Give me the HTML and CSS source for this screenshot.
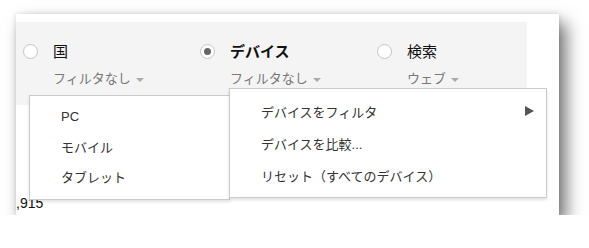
FILE: index.html
```html
<!DOCTYPE html>
<html lang="ja">
<head>
  <meta charset="UTF-8">
  <title>ディメンション選択</title>
  <link rel="stylesheet" href="styles.css">
</head>
<body>
  <div class="window">
    <div class="tabs">
      <div class="tab">
        <span class="radio"></span>
        <div class="tab-text">
          <div class="label">国</div>
          <div class="sub">フィルタなし <span class="caret"></span></div>
        </div>
      </div>
      <div class="tab">
        <span class="radio checked"></span>
        <div class="tab-text">
          <div class="label bold">デバイス</div>
          <div class="sub">フィルタなし <span class="caret"></span></div>
        </div>
      </div>
      <div class="tab">
        <span class="radio"></span>
        <div class="tab-text">
          <div class="label">検索</div>
          <div class="sub">ウェブ <span class="caret"></span></div>
        </div>
      </div>
    </div>
    <div class="count">,915</div>

    <ul class="menu menu-devices">
      <li>PC</li>
      <li>モバイル</li>
      <li>タブレット</li>
    </ul>
    <ul class="menu menu-actions">
      <li>デバイスをフィルタ <span class="arrow"></span></li>
      <li>デバイスを比較...</li>
      <li>リセット（すべてのデバイス）</li>
    </ul>
  </div>
</body>
</html>
```

FILE: styles.css
```css
:root {
  --panel: #f4f4f4;
  --text: #222;
  --muted: #777;
  --menu-border: #cbcbcb;
}
* { box-sizing: border-box; }
body {
  margin: 0;
  padding: 14px 0 0 16px;
  background: #fff;
  font-family: "Liberation Sans", "Noto Sans CJK JP", sans-serif;
  color: var(--text);
}

/* Window card */
.window {
  position: relative;
  width: 543px;
  height: 201px;
  background: #fff;
  box-shadow: 7px 9px 16px rgba(0, 0, 0, 0.55), 0 0 5px rgba(0, 0, 0, 0.12);
  padding-top: 8px;
}

/* Dimension tabs */
.tabs {
  display: flex;
  width: 511px;
  height: 83px;
  background: var(--panel);
  padding: 22px 0 0 7px;
}
.tab {
  display: flex;
  flex: none;
  width: 177px;
  gap: 15px;
}
.tab:last-child { width: auto; }
.radio {
  flex: none;
  width: 15px;
  height: 15px;
  border: 1px solid #c4c4c4;
  border-radius: 50%;
  background: #fff;
  display: flex;
  align-items: center;
  justify-content: center;
}
.radio.checked::after {
  content: '';
  width: 7px;
  height: 7px;
  border-radius: 50%;
  background: #666;
}
.label {
  font-size: 15px;
  line-height: 15px;
  color: #111;
}
.label.bold { font-weight: 700; }
.sub {
  margin-top: 12px;
  font-size: 13px;
  line-height: 16px;
  color: var(--muted);
  display: flex;
  align-items: center;
  gap: 5px;
}
.caret {
  width: 0;
  height: 0;
  border-left: 4px solid transparent;
  border-right: 4px solid transparent;
  border-top: 4px solid #aaa;
  margin-top: 1px;
}

.count {
  margin-top: 90px;
  font-size: 14px;
  color: #111;
}

/* Dropdown menus */
.menu {
  position: absolute;
  margin: 0;
  list-style: none;
  background: #fff;
  border: 1px solid var(--menu-border);
  box-shadow: 0 2px 3px rgba(0, 0, 0, 0.12);
  font-size: 13px;
  color: #333;
}
.menu li {
  display: flex;
  align-items: center;
  padding-left: 31px;
}
.menu-devices {
  left: 13px;
  top: 81px;
  width: 201px;
  height: 105px;
  padding: 5px 0 0;
}
.menu-devices li { height: 30px; }
.menu-actions {
  left: 213px;
  top: 74px;
  width: 318px;
  height: 110px;
  padding: 6px 0 0;
}
.menu-actions li {
  height: 32px;
  padding-right: 12px;
}
.arrow {
  margin-left: auto;
  width: 0;
  height: 0;
  border-top: 5px solid transparent;
  border-bottom: 5px solid transparent;
  border-left: 9px solid #555;
}
```
